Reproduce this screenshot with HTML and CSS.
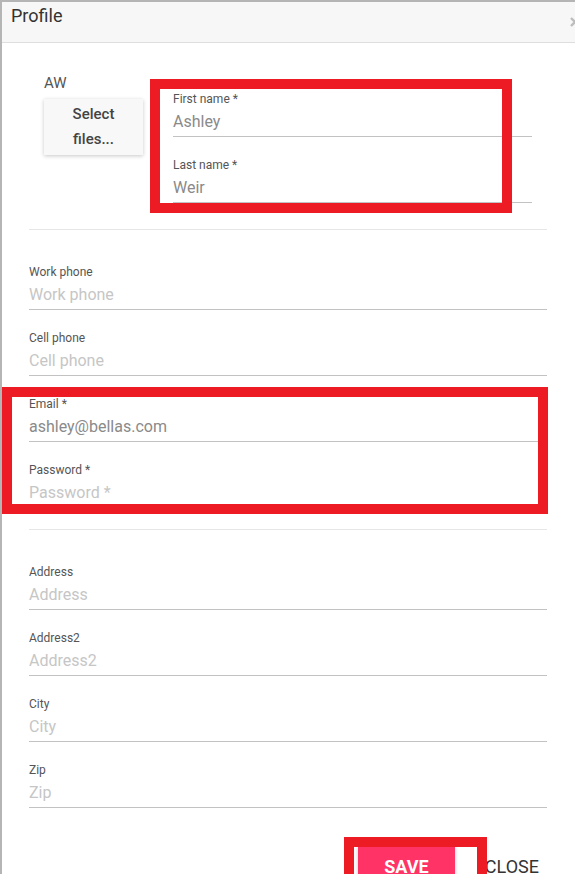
FILE: index.html
```html
<!DOCTYPE html>
<html lang="en">
<head>
<meta charset="utf-8">
<title>Profile</title>
<link rel="stylesheet" href="styles.css">
</head>
<body>
<div class="page">
  <div class="dialog">
    <div class="dialog-header">
      <span class="dialog-title">Profile</span>
      <svg class="close-icon" width="10" height="10" viewBox="0 0 10 10" aria-hidden="true">
        <path d="M1 1 L9 9 M9 1 L1 9" stroke="#bdbdbd" stroke-width="2.4" fill="none"/>
      </svg>
    </div>
    <div class="dialog-body">
      <div class="profile-top">
        <div class="avatar-col">
          <div class="initials">AW</div>
          <button class="upload-btn" type="button">Select files...</button>
        </div>
        <div class="fields name-col">
          <div class="field">
            <div class="field-label">First name *</div>
            <div class="field-input value">Ashley</div>
          </div>
          <div class="field">
            <div class="field-label">Last name *</div>
            <div class="field-input value">Weir</div>
          </div>
        </div>
      </div>
      <div class="divider divider-1"></div>
      <div class="fields">
        <div class="field">
          <div class="field-label">Work phone</div>
          <div class="field-input placeholder">Work phone</div>
        </div>
        <div class="field">
          <div class="field-label">Cell phone</div>
          <div class="field-input placeholder">Cell phone</div>
        </div>
        <div class="field">
          <div class="field-label">Email *</div>
          <div class="field-input value">ashley@bellas.com</div>
        </div>
        <div class="field">
          <div class="field-label">Password *</div>
          <div class="field-input placeholder">Password *</div>
        </div>
      </div>
      <div class="divider divider-2"></div>
      <div class="fields">
        <div class="field">
          <div class="field-label">Address</div>
          <div class="field-input placeholder">Address</div>
        </div>
        <div class="field">
          <div class="field-label">Address2</div>
          <div class="field-input placeholder">Address2</div>
        </div>
        <div class="field">
          <div class="field-label">City</div>
          <div class="field-input placeholder">City</div>
        </div>
        <div class="field">
          <div class="field-label">Zip</div>
          <div class="field-input placeholder">Zip</div>
        </div>
      </div>
      <div class="actions">
        <button class="btn-save" type="button">SAVE</button>
        <button class="btn-close" type="button">CLOSE</button>
      </div>
    </div>
  </div>
  <div class="mark mark-names"></div>
  <div class="mark mark-login"></div>
  <div class="mark mark-save"></div>
</div>
</body>
</html>
```

FILE: styles.css
```css
html, body {
  margin: 0;
  padding: 0;
  overflow: hidden;
  background: #ffffff;
}

body {
  font-family: Roboto, "Liberation Sans", Arial, sans-serif;
  color: #333;
}

.page {
  position: relative;
  width: 575px;
  height: 874px;
  overflow: hidden;
}

.dialog {
  border-left: 2px solid #b5b5b5;
  border-top: 2px solid #b5b5b5;
  min-height: 1000px;
  box-sizing: border-box;
}

.dialog-header {
  display: flex;
  align-items: flex-start;
  height: 40px;
  background: #f7f7f7;
  border-bottom: 1px solid #dedede;
  padding-left: 9px;
}

.dialog-title {
  font-size: 18px;
  line-height: 22px;
  padding-top: 3px;
  color: #333;
}

.close-icon {
  margin-left: auto;
  margin-right: -5px;
  margin-top: 15px;
}

.dialog-body {
  padding: 0 28px 0 27px;
}

.profile-top {
  display: flex;
  padding-top: 31px;
}

.avatar-col {
  width: 144px;
  flex: none;
  padding-left: 15px;
  box-sizing: border-box;
}

.initials {
  font-size: 15px;
  line-height: 18px;
  color: #555;
}

.upload-btn {
  display: block;
  margin-top: 7px;
  width: 99px;
  padding: 3px 10px;
  border: none;
  background: #f8f8f8;
  box-shadow: 0 1px 4px rgba(0, 0, 0, 0.22);
  font-family: inherit;
  font-size: 15px;
  font-weight: 500;
  line-height: 25px;
  color: #444;
  text-align: center;
}

.fields {
  display: flex;
  flex-direction: column;
  gap: 19px;
}

.name-col {
  flex: 1;
  margin-top: 16px;
  margin-right: 15px;
}

.field-label {
  font-size: 12px;
  line-height: 16px;
  padding-top: 1px;
  color: #555;
}

.field-input {
  font-size: 16px;
  line-height: 20px;
  padding: 5px 0 4px;
  border-bottom: 1px solid #c2c2c2;
}

.field-input.value {
  color: #8a8a8a;
}

.field-input.placeholder {
  color: #c6c6c6;
}

.divider {
  height: 1px;
  background: #e6e6e6;
  margin-bottom: 33px;
}

.divider-1 {
  margin-top: 26px;
}

.divider-2 {
  margin-top: 21px;
}

.actions {
  display: flex;
  justify-content: flex-end;
  align-items: flex-start;
  gap: 22px;
  margin-top: 38px;
}

.btn-save {
  border: none;
  background: #ff3366;
  color: #fff;
  font-family: inherit;
  font-size: 18px;
  font-weight: 700;
  line-height: 42px;
  width: 97px;
  padding: 0;
  text-align: center;
  box-shadow: 0 1px 4px rgba(0, 0, 0, 0.22);
}

.btn-close {
  border: none;
  background: transparent;
  color: #333;
  font-family: inherit;
  font-size: 18px;
  line-height: 42px;
  padding: 0 8px;
}

.mark {
  position: absolute;
  border: 10px solid #ed1c24;
  box-sizing: border-box;
  pointer-events: none;
}

.mark-names {
  left: 150px;
  top: 79px;
  width: 362px;
  height: 134px;
}

.mark-login {
  left: 2px;
  top: 387px;
  width: 546px;
  height: 127px;
}

.mark-save {
  left: 344px;
  top: 837px;
  width: 143px;
  height: 80px;
}
```
